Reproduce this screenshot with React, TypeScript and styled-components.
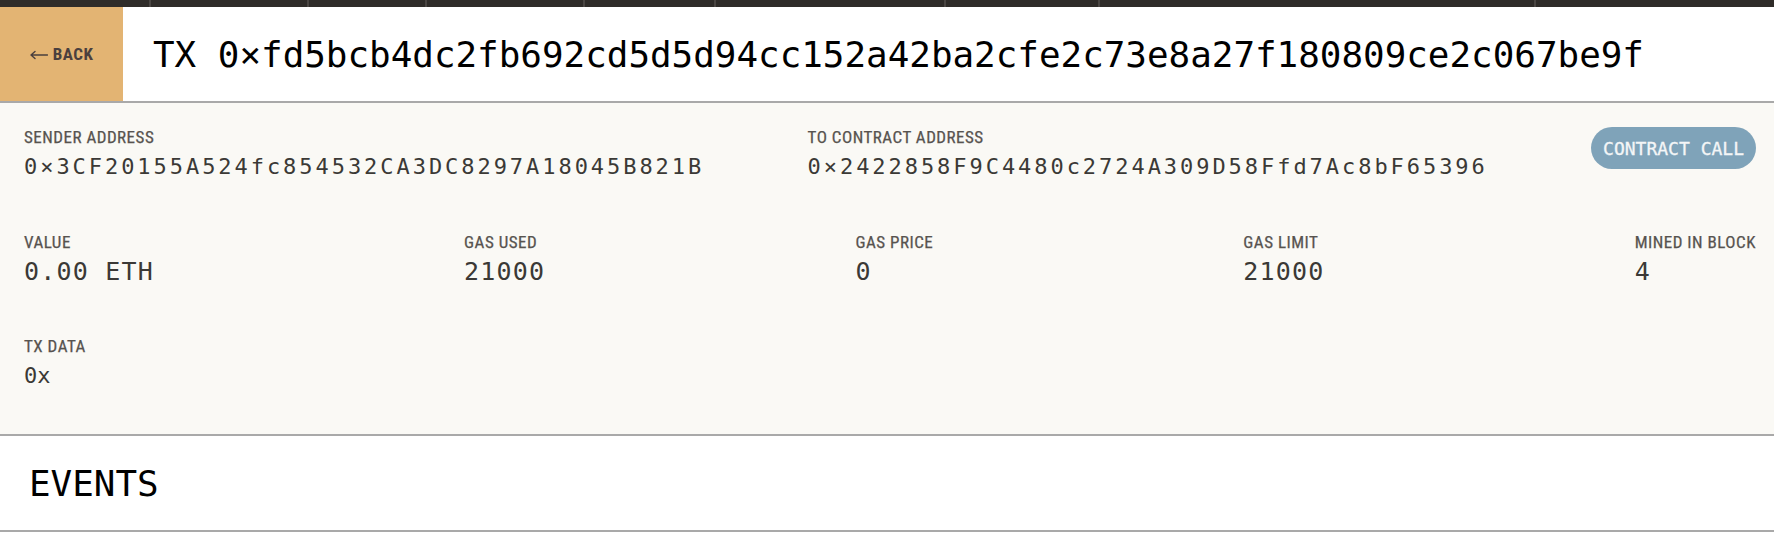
import React from "react";
import styled, { createGlobalStyle } from "styled-components";

const GlobalStyle = createGlobalStyle`
  html, body {
    margin: 0;
    padding: 0;
    background: #ffffff;
  }
  * { box-sizing: border-box; }
`;

const MONO = `"DejaVu Sans Mono", "Liberation Mono", monospace`;
const NARROW = `"Liberation Sans Narrow", "Roboto Condensed", "Liberation Sans", sans-serif`;

const Page = styled.div`
  width: 1774px;
  display: flex;
  flex-direction: column;
`;

const TopStrip = styled.div`
  height: 7px;
  background: #2f2c29;
  display: flex;
`;

const StripTab = styled.div<{ $w: number }>`
  width: ${(p) => p.$w}px;
  border-right: 2px solid #4a4643;
  flex: none;
`;

const Header = styled.div`
  height: 96px;
  display: flex;
  align-items: stretch;
  border-bottom: 2px solid #a9a9a9;
  background: #ffffff;
`;

const BackButton = styled.button`
  width: 123px;
  flex: none;
  border: none;
  margin: 0;
  padding: 0;
  background: #e3b473;
  color: #4a3f3e;
  font-family: ${NARROW};
  font-weight: 700;
  font-size: 17px;
  letter-spacing: 0.5px;
  display: flex;
  align-items: center;
  justify-content: center;
  gap: 5px;
  cursor: pointer;
`;

const ArrowIcon = styled.svg`
  width: 18px;
  height: 10px;
  flex: none;
  margin-top: 1px;
`;

const Title = styled.h1`
  margin: 0;
  padding-left: 30px;
  display: flex;
  align-items: center;
  font-family: ${MONO};
  font-weight: 400;
  font-size: 35.9px;
  color: #000000;
`;

const Panel = styled.section`
  background: #faf9f5;
  padding: 24px 18px 44px 24px;
  border-bottom: 2px solid #a9a9a9;
  display: flex;
  flex-direction: column;
`;

const Row = styled.div<{ $gap: number }>`
  display: flex;
  justify-content: space-between;
  align-items: flex-start;
  margin-top: ${(p) => p.$gap}px;
  &:first-child { margin-top: 0; }
`;

const Field = styled.div`
  display: flex;
  flex-direction: column;
`;

const Label = styled.div<{ $gap: number }>`
  font-family: ${NARROW};
  font-size: 17px;
  line-height: 20px;
  letter-spacing: 0.5px;
  -webkit-text-stroke: 0.25px currentColor;
  color: #57534f;
  text-transform: uppercase;
  margin-bottom: ${(p) => p.$gap}px;
  white-space: nowrap;
`;

const Value = styled.div<{ $size: "small" | "large"; $spacing: number }>`
  font-family: ${MONO};
  font-size: ${(p) => (p.$size === "large" ? 25 : 22)}px;
  line-height: ${(p) => (p.$size === "large" ? 30 : 28)}px;
  letter-spacing: ${(p) => p.$spacing}px;
  color: #3b3936;
  white-space: nowrap;
`;

const Badge = styled.div`
  height: 42px;
  padding: 0 12px;
  border-radius: 21px;
  background: #7fa3b9;
  color: #f4f6f7;
  font-family: ${MONO};
  font-weight: 400;
  font-size: 18px;
  -webkit-text-stroke: 0.3px currentColor;
  display: flex;
  align-items: center;
  white-space: nowrap;
`;

const SectionHeader = styled.h2`
  margin: 0;
  height: 96px;
  padding-left: 29px;
  display: flex;
  align-items: center;
  border-bottom: 2px solid #a9a9a9;
  font-family: ${MONO};
  font-weight: 400;
  font-size: 35.9px;
  color: #000000;
`;

const Spacer = styled.div`
  height: 12px;
  background: #ffffff;
`;

const stripTabs = [151, 158, 118, 158, 131, 230, 154, 436];

const statFields = [
  { label: "Value", value: "0.00 ETH" },
  { label: "Gas Used", value: "21000" },
  { label: "Gas Price", value: "0" },
  { label: "Gas Limit", value: "21000" },
  { label: "Mined In Block", value: "4" },
];

export default function App() {
  return (
    <Page>
      <GlobalStyle />
      <TopStrip>
        {stripTabs.map((w, i) => (
          <StripTab key={i} $w={w} />
        ))}
      </TopStrip>
      <Header>
        <BackButton>
          <ArrowIcon viewBox="0 0 18 10" fill="none" stroke="currentColor" strokeWidth={1.4} strokeLinecap="round" strokeLinejoin="round">
            <path d="M1 5 H17.5 M5 1.5 L1 5 L5 8.5" />
          </ArrowIcon>
          BACK
        </BackButton>
        <Title>TX 0×fd5bcb4dc2fb692cd5d5d94cc152a42ba2cfe2c73e8a27f180809ce2c067be9f</Title>
      </Header>
      <Panel>
        <Row $gap={0}>
          <Field>
            <Label $gap={6}>Sender Address</Label>
            <Value $size="small" $spacing={2.95}>0×3CF20155A524fc854532CA3DC8297A18045B821B</Value>
          </Field>
          <Field>
            <Label $gap={6}>To Contract Address</Label>
            <Value $size="small" $spacing={2.95}>0×2422858F9C4480c2724A309D58Ffd7Ac8bF65396</Value>
          </Field>
          <Badge>CONTRACT CALL</Badge>
        </Row>
        <Row $gap={51}>
          {statFields.map((f) => (
            <Field key={f.label}>
              <Label $gap={5}>{f.label}</Label>
              <Value $size="large" $spacing={1.2}>{f.value}</Value>
            </Field>
          ))}
        </Row>
        <Row $gap={49}>
          <Field>
            <Label $gap={6}>TX Data</Label>
            <Value $size="small" $spacing={0}>0x</Value>
          </Field>
        </Row>
      </Panel>
      <SectionHeader>EVENTS</SectionHeader>
      <Spacer />
    </Page>
  );
}
